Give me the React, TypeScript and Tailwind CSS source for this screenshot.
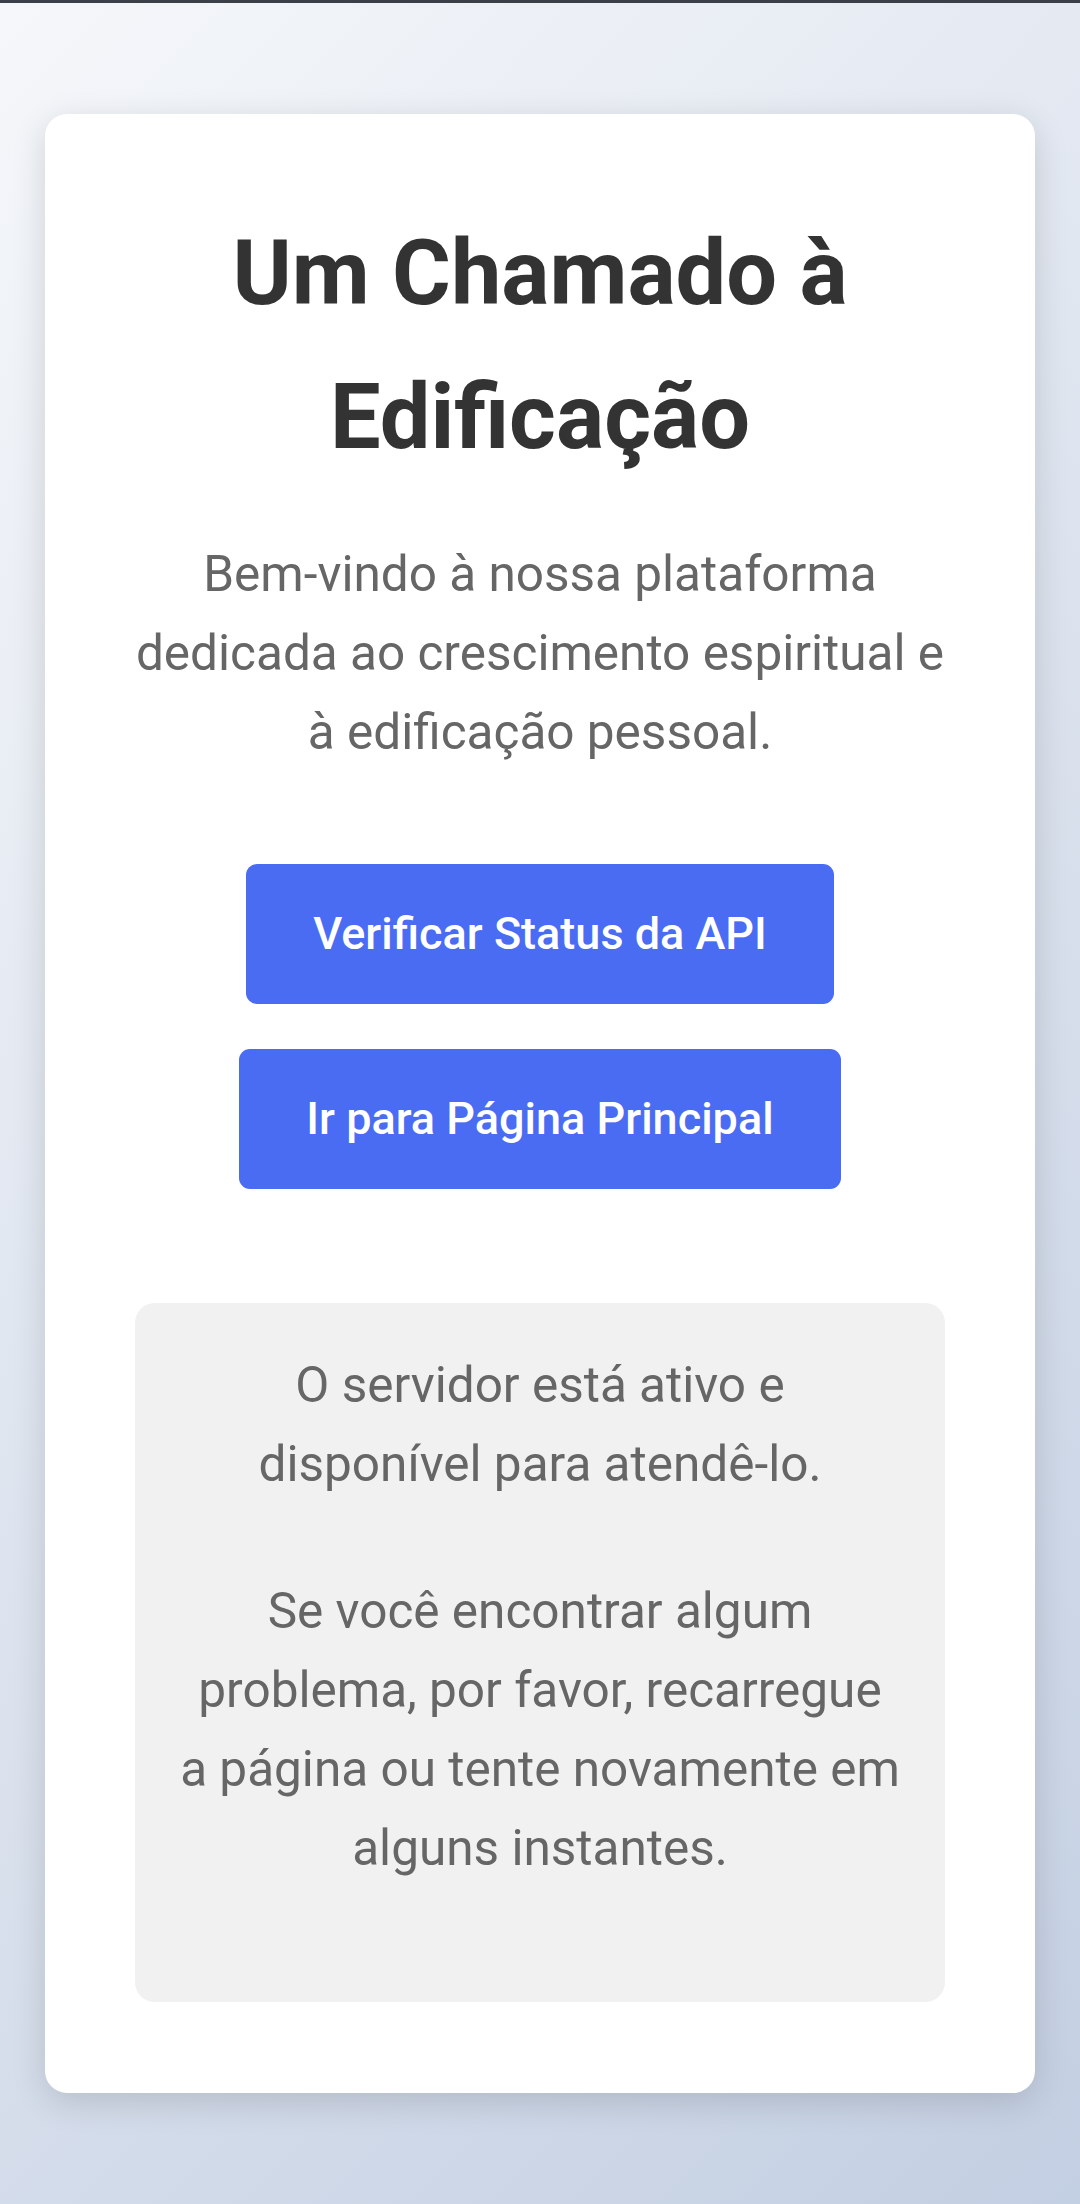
export default function App() {
  return (
    <div
      className="min-h-[2204px] w-full bg-[linear-gradient(135deg,#f5f7fa_0%,#c3cfe2_100%)]"
      style={{ fontFamily: "Roboto, 'Noto Sans', Arial, sans-serif" }}
    >
      {/* top strip */}
      <div className="h-[3px] w-full bg-[#3b3f47]" />

      <div className="px-[45px] pt-[111px] pb-[113px]">
        <div className="w-full rounded-[22px] bg-white px-[90px] pt-[88px] pb-[91px] text-center shadow-[0_9px_34px_rgba(0,0,0,0.14)]">
          <h1 className="text-[90px] font-bold leading-[144px] text-[#333333]">
            Um Chamado à Edificação
          </h1>
          <p className="mt-[45px] text-[49.5px] leading-[79px] text-[#666666]">
            Bem-vindo à nossa plataforma dedicada ao crescimento espiritual e à edificação pessoal.
          </p>

          <div className="mt-[92px] flex flex-col items-center gap-[45px]">
            <button className="rounded-[11px] bg-[#4a6cf3] px-[67px] py-[34px] text-[45px] font-medium leading-[72px] text-white">
              Verificar Status da API
            </button>
            <button className="rounded-[11px] bg-[#4a6cf3] px-[67px] py-[34px] text-[45px] font-medium leading-[72px] text-white">
              Ir para Página Principal
            </button>
          </div>

          <div className="mt-[114px] rounded-[20px] bg-[#f1f1f1] px-[45px] pt-[43px] pb-[45px] text-[49.5px] leading-[79px] text-[#666666]">
            <p className="mb-[68px]">O servidor está ativo e disponível para atendê-lo.</p>
            <p className="mb-[69px]">
              Se você encontrar algum problema, por favor, recarregue a página ou tente novamente em alguns instantes.
            </p>
          </div>
        </div>
      </div>
    </div>
  );
}
